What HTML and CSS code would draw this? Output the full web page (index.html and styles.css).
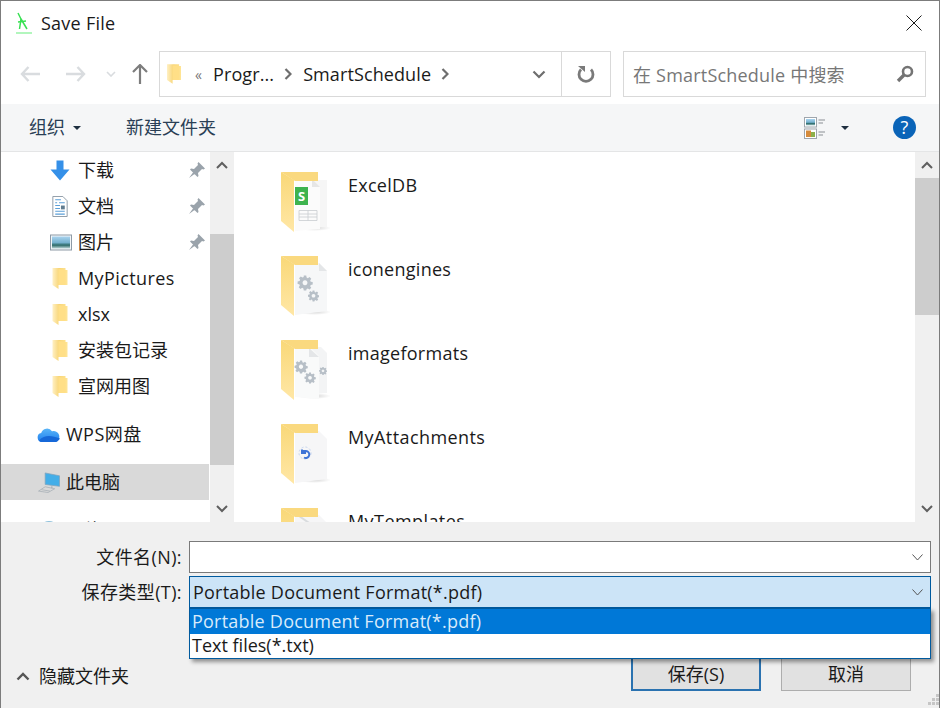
FILE: index.html
```html
<!DOCTYPE html>
<html lang="zh">
<head>
<meta charset="utf-8">
<title>Save File</title>
<link rel="stylesheet" href="styles.css">
</head>
<body>
<svg class="defs" aria-hidden="true">
  <defs>
    <linearGradient id="fy" x1="0" y1="0" x2="1" y2="0"><stop offset="0" stop-color="#fff0c4"/><stop offset=".45" stop-color="#f8d576"/><stop offset="1" stop-color="#ffe596"/></linearGradient>
    <linearGradient id="flap" x1="0" y1="0" x2="0" y2="1"><stop offset="0" stop-color="#f9d878"/><stop offset="1" stop-color="#ffe7a6"/></linearGradient>
    <linearGradient id="sky" x1="0" y1="0" x2="0" y2="1"><stop offset="0" stop-color="#a9d3ef"/><stop offset=".5" stop-color="#76b2cf"/><stop offset=".72" stop-color="#2c6a68"/><stop offset="1" stop-color="#c2dadd"/></linearGradient>
    <linearGradient id="cloud" x1="0" y1="0" x2="0" y2="1"><stop offset="0" stop-color="#58b4f8"/><stop offset="1" stop-color="#1f7fee"/></linearGradient>
    <radialGradient id="shade" cx=".5" cy=".5" r=".5"><stop offset="0" stop-color="#000" stop-opacity=".16"/><stop offset="1" stop-color="#000" stop-opacity="0"/></radialGradient>
    <symbol id="small-folder" viewBox="0 0 15 21">
      <path d="M0 0H13V2H15V17H6V21L0 17Z" fill="url(#fy)"/>
      <path d="M6 1 13 2V17H6Z" fill="#ffdf87"/>
    </symbol>
    <symbol id="pin" viewBox="0 0 18 18">
      <path d="M10.500 1 17 7.500 15.500 8.500 14 8 10 12 10.500 15 9.500 16 2 8.500 3 7.500 6 8 10 4 9.500 2.500Z M5 11.500 1 17 6.500 13Z" fill="#9aa3ab"/>
    </symbol>
    <symbol id="big-folder" viewBox="0 0 50 62">
      <path d="M0 1H37V10H14Z" fill="#fad97f"/>
      <path d="M0 1 13 9V61L0 50Z" fill="url(#flap)"/>
    </symbol>
    <symbol id="gear" viewBox="0 0 24 26">
      <path d="M10 1h4l.6 3.200 2 .9 2.800-1.800 2.800 2.800-1.800 2.800.9 2 3.200.6v4l-3.200.6-.9 2 1.800 2.800-2.800 2.800-2.800-1.800-2 .9L14 25h-4l-.6-3.200-2-.9-2.800 1.800-2.800-2.800 1.800-2.800-.9-2L0 14.500v-4l3.200-.6.9-2L2.300 5.100 5.100 2.300l2.800 1.800 2-.9Z M12 8.500a4 4 0 1 0 .01 0Z" fill="#b7bfc7" fill-rule="evenodd"/>
    </symbol>
  </defs>
</svg>

<div class="window">
  <header class="titlebar">
    <svg class="app-icon" viewBox="0 0 16 22"><g fill="none" stroke="#38e052" stroke-width="1.500"><path d="M2 1 5 7 3.500 17"/><path d="M5 7 8 12 11 17"/><path d="M2 10 10 9"/></g><path d="M0 21H16" stroke="#7ff090" stroke-width="1.200"/></svg>
    <span class="title">Save File</span>
    <svg class="close" viewBox="0 0 16 16"><path d="M.5.5 15.500 15.500M15.500.5.500 15.500" stroke="#1a1a1a" stroke-width="1" fill="none"/></svg>
  </header>

  <nav class="navbar">
    <svg class="nav-arrow back" viewBox="0 0 20 16"><path d="M8.500 1 2 8l6.500 7M2 8H20" fill="none" stroke="#d9dcdf" stroke-width="2.400"/></svg>
    <svg class="nav-arrow fwd" viewBox="0 0 20 16"><path d="M11.500 1 18 8l-6.500 7M18 8H0" fill="none" stroke="#d9dcdf" stroke-width="2.400"/></svg>
    <svg class="nav-chev" viewBox="0 0 10 6"><path d="M1 1 5 5 9 1" fill="none" stroke="#d9dcdf" stroke-width="1.600"/></svg>
    <svg class="nav-up" viewBox="0 0 16 20"><path d="M1 8 8 1l7 7M8 1V20" fill="none" stroke="#7d7d7d" stroke-width="2.200"/></svg>
    <div class="address">
      <svg class="addr-folder"><use href="#small-folder"/></svg>
      <span class="crumb-more">«</span>
      <span class="crumb">Progr...</span>
      <svg class="crumb-sep" viewBox="0 0 8 12"><path d="M1.500 1 6.500 6l-5 5" fill="none" stroke="#6e6e6e" stroke-width="2.200"/></svg>
      <span class="crumb">SmartSchedule</span>
      <svg class="crumb-sep" viewBox="0 0 8 12"><path d="M1.500 1 6.500 6l-5 5" fill="none" stroke="#6e6e6e" stroke-width="2.200"/></svg>
      <svg class="addr-drop" viewBox="0 0 14 9"><path d="M1.500 1.500 7 7l5.500-5.500" fill="none" stroke="#6e6e6e" stroke-width="2.200"/></svg>
      <div class="refresh">
        <svg viewBox="0 0 18 18"><path d="M4 4.500A7 7 0 1 0 14 4.500" fill="none" stroke="#7a7a7a" stroke-width="2.800"/><path d="M1 1 8 1 8 7Z" fill="#7a7a7a"/></svg>
      </div>
    </div>
    <div class="search">
      <span>在 SmartSchedule 中搜索</span>
      <svg viewBox="0 0 18 18"><circle cx="11.500" cy="6.500" r="4.500" fill="none" stroke="#747474" stroke-width="2.600"/><path d="M8 10 2 16" stroke="#747474" stroke-width="3.400"/></svg>
    </div>
  </nav>

  <div class="toolbar">
    <span class="tool">组织</span>
    <i class="caret organize-caret"></i>
    <span class="tool new-folder">新建文件夹</span>
    <svg class="view-icon" viewBox="0 0 22 22">
      <rect x=".5" y=".5" width="12" height="9.500" fill="#fff" stroke="#9fa6ad"/><rect x="2" y="2" width="9" height="6.500" fill="url(#sky)"/>
      <rect x=".5" y="12" width="12" height="9.500" fill="#fff" stroke="#9fa6ad"/><rect x="2" y="13.500" width="5" height="6.500" fill="#d58b3c"/><rect x="7" y="15" width="4" height="5" fill="#8db04a"/>
      <path d="M14.500 3H21M14.500 6H19M14.500 15H21M14.500 18H19" stroke="#8a8f94"/>
    </svg>
    <i class="caret view-caret"></i>
    <div class="help">?</div>
  </div>

  <main class="content">
    <aside class="tree">
      <div class="tree-row sub"><svg class="tree-icon" viewBox="0 0 20 20"><path d="M6.500 0H13.500V9H19.500L10 20 .5 9H6.500Z" fill="#3590e8"/></svg><span class="zh">下载</span><svg class="pin"><use href="#pin"/></svg></div>
      <div class="tree-row sub"><svg class="tree-icon" viewBox="0 0 20 22"><path d="M2.500.5H13L17.500 5V21.500H2.500Z" fill="#fff" stroke="#8e9aa6"/><path d="M5 4h6M5 7h2M9 7h6M5 10h5M5 13h5M5 16h10M5 19h10" stroke="#5b9fd8" stroke-width="1.100"/><rect x="11" y="10" width="4" height="4" fill="#607c90"/></svg><span class="zh">文档</span><svg class="pin"><use href="#pin"/></svg></div>
      <div class="tree-row sub"><svg class="tree-icon wide" viewBox="0 0 22 16"><rect x=".5" y=".5" width="21" height="15" fill="#f3f6f8" stroke="#8e9aa6"/><rect x="2" y="2" width="18" height="12" fill="url(#sky)"/></svg><span class="zh">图片</span><svg class="pin"><use href="#pin"/></svg></div>
      <div class="tree-row sub"><svg class="tree-icon"><use href="#small-folder"/></svg><span class="name-pics">MyPictures</span></div>
      <div class="tree-row sub"><svg class="tree-icon"><use href="#small-folder"/></svg><span>xlsx</span></div>
      <div class="tree-row sub"><svg class="tree-icon"><use href="#small-folder"/></svg><span class="zh">安装包记录</span></div>
      <div class="tree-row sub"><svg class="tree-icon"><use href="#small-folder"/></svg><span class="zh">宣网用图</span></div>
      <div class="tree-row top group"><svg class="tree-icon wide-top" viewBox="0 0 24 16"><path d="M5 15.500A4.500 4.500 0 0 1 4.200 6.600 6 6 0 0 1 15 4.800 5.200 5.200 0 1 1 18.500 15.500Z" fill="url(#cloud)"/><path d="M2 14C8 8 14 9 23 12 21 15 19 15.500 18.500 15.500H5Q3 15.500 2 14Z" fill="#1668d8"/></svg><span class="zh name-wps">WPS网盘</span></div>
      <div class="tree-row top group selected"><svg class="tree-icon wide-top" viewBox="0 0 24 22"><path d="M8 1 23 4V15L8 13Z" fill="#43aee8" stroke="#7fa4bd" stroke-width=".8"/><path d="M15 15V17" stroke="#9aa3ab"/><path d="M1 20 8 15.500 18 17.500 11 21.500ZM4 18.500 13 20" fill="none" stroke="#a7afb6" stroke-width=".8"/></svg><span class="zh">此电脑</span></div>
      <div class="tree-row top group"><svg class="tree-icon wide-top" viewBox="0 0 22 22"><circle cx="11" cy="11" r="10" fill="#8fc1dc"/></svg><span class="zh">网络</span></div>
    </aside>
    <div class="scrollbar tree-scroll">
      <button class="sb-btn"><svg viewBox="0 0 12 8"><path d="M1 7 6 2l5 5" fill="none" stroke="#5f5f5f" stroke-width="2"/></svg></button>
      <div class="sb-track"><div class="sb-pad p1"></div><div class="sb-thumb t1"></div></div>
      <button class="sb-btn"><svg viewBox="0 0 12 8"><path d="M1 1 6 6l5-5" fill="none" stroke="#5f5f5f" stroke-width="2"/></svg></button>
    </div>

    <section class="files">
      <div class="file">
        <svg class="big" viewBox="0 0 50 62">
          <ellipse cx="33" cy="57" rx="17" ry="3" fill="url(#shade)"/>
          <path d="M22 9H46V56H22Z" fill="#f6f6f6"/>
          <path d="M14 8H31L39 16V58L14 60Z" fill="#fbfbfb"/>
          <path d="M31 8V16H39Z" fill="#e6e6e6"/>
          <use href="#big-folder" width="50" height="62"/>
          <rect x="14" y="16" width="13" height="18" fill="#3eb34f"/>
          <text x="17" y="30" class="badge">S</text>
          <path d="M18 39.500H36V49.500H18ZM18 43H36M18 46H36M27 39.500V49.500" fill="none" stroke="#c9cdd1" stroke-width=".8"/>
        </svg>
        <span>ExcelDB</span>
      </div>
      <div class="file">
        <svg class="big" viewBox="0 0 50 62">
          <ellipse cx="33" cy="57" rx="17" ry="3" fill="url(#shade)"/>
          <path d="M14 8H38L46 16V56L14 60Z" fill="#f6f7f8"/>
          <path d="M38 8V16H46Z" fill="#e4e6e8"/>
          <use href="#big-folder" width="50" height="62"/>
          <use href="#gear" x="16" y="20" width="16" height="16"/>
          <use href="#gear" x="27" y="35" width="11" height="12"/>
        </svg>
        <span>iconengines</span>
      </div>
      <div class="file">
        <svg class="big" viewBox="0 0 50 62">
          <ellipse cx="33" cy="57" rx="17" ry="3" fill="url(#shade)"/>
          <path d="M30 8H40L46 14V54L30 55Z" fill="#f3f4f5"/>
          <path d="M14 9H30L38 17V60L14 58Z" fill="#f9fafa"/>
          <path d="M28 9V18H38Z" fill="#e4e6e8"/>
          <use href="#big-folder" width="50" height="62"/>
          <use href="#gear" x="13" y="21" width="14" height="14"/>
          <use href="#gear" x="23" y="33" width="12" height="12"/>
          <use href="#gear" x="38" y="26" width="8" height="12"/>
        </svg>
        <span>imageformats</span>
      </div>
      <div class="file">
        <svg class="big" viewBox="0 0 50 62">
          <ellipse cx="33" cy="57" rx="17" ry="3" fill="url(#shade)"/>
          <path d="M14 8H38L46 16V56L14 60Z" fill="#f6f6f7"/>
          <use href="#big-folder" width="50" height="62"/>
          <circle cx="24" cy="30" r="6" fill="none" stroke="#c4d3ee" stroke-dasharray="2 2"/>
          <path d="M21 26.500 21 30H25M21.500 28H25A3.500 3.500 0 1 1 23 34.500" fill="none" stroke="#3f74d6" stroke-width="2"/>
        </svg>
        <span class="name-long">MyAttachments</span>
      </div>
      <div class="file">
        <svg class="big" viewBox="0 0 50 62">
          <path d="M14 8H38L46 16V56L14 60Z" fill="#f6f6f7"/>
          <path d="M18 9 34 20" stroke="#d9dcde" stroke-width="2" fill="none"/>
          <use href="#big-folder" width="50" height="62"/>
        </svg>
        <span class="name-long">MyTemplates</span>
      </div>
    </section>
    <div class="scrollbar files-scroll">
      <button class="sb-btn"><svg viewBox="0 0 12 8"><path d="M1 7 6 2l5 5" fill="none" stroke="#5f5f5f" stroke-width="2"/></svg></button>
      <div class="sb-track"><div class="sb-thumb t2"></div></div>
      <button class="sb-btn"><svg viewBox="0 0 12 8"><path d="M1 1 6 6l5-5" fill="none" stroke="#5f5f5f" stroke-width="2"/></svg></button>
    </div>
  </main>

  <footer class="panel">
    <div class="form">
      <label>文件名(N):</label>
      <div class="combo">
        <span></span>
        <svg viewBox="0 0 11 7"><path d="M.5.5 5.500 6 10.500.5" fill="none" stroke="#555" stroke-width="1"/></svg>
      </div>
      <label>保存类型(T):</label>
      <div class="combo open">
        <span class="format">Portable Document Format(*.pdf)</span>
        <svg viewBox="0 0 11 7"><path d="M.5.5 5.500 6 10.500.5" fill="none" stroke="#555" stroke-width="1"/></svg>
        <ul class="dropdown">
          <li class="active format">Portable Document Format(*.pdf)</li>
          <li>Text files(*.txt)</li>
        </ul>
      </div>
    </div>
    <div class="actions">
      <div class="toggle">
        <svg viewBox="0 0 14 9"><path d="M1.500 7.500 7 2l5.500 5.500" fill="none" stroke="#555" stroke-width="2.400"/></svg>
        <span class="zh">隐藏文件夹</span>
      </div>
      <button class="btn primary">保存(S)</button>
      <button class="btn">取消</button>
    </div>
    <svg class="grip" viewBox="0 0 12 12"><path d="M9 0h3v3H9zM5 4h3v3H5zM9 4h3v3H9zM1 8h3v3H1zM5 8h3v3H5zM9 8h3v3H9z" fill="#c6c6c6"/></svg>
  </footer>
</div>
</body>
</html>
```

FILE: styles.css
```css
* { box-sizing: border-box; }
html, body { margin: 0; padding: 0; }
body {
  width: 940px;
  height: 708px;
  overflow: hidden;
  background: #fff;
  font-family: "Open Sans", "Noto Sans CJK SC", sans-serif;
  font-size: 18px;
  color: #1a1a1a;
}
.defs { display: block; width: 0; height: 0; }
.zh { padding-bottom: 2px; }

.window {
  width: 940px;
  height: 708px;
  display: flex;
  flex-direction: column;
  border-top: 1px solid #7c7c7c;
  border-left: 1px solid #7c7c7c;
  border-right: 1px solid #7c7c7c;
  background: #fff;
}

/* Title bar */
.titlebar {
  height: 44px;
  flex: none;
  display: flex;
  align-items: center;
  padding: 0 17px 0 15px;
}
.app-icon { width: 16px; height: 22px; }
.title { margin-left: 9px; font-size: 18px; letter-spacing: .25px; color: #1a1a1a; }
.close { width: 16px; height: 16px; margin-left: auto; }

/* Navigation */
.navbar {
  height: 46px;
  margin-top: 6px;
  flex: none;
  display: flex;
  align-items: center;
  padding-left: 19px;
}
.nav-arrow { width: 20px; height: 16px; flex: none; }
.fwd { margin-left: 26px; }
.nav-chev { width: 10px; height: 6px; margin-left: 20px; flex: none; }
.nav-up { width: 16px; height: 20px; margin-left: 16px; flex: none; }
.address {
  width: 452px;
  height: 46px;
  margin-left: 11px;
  flex: none;
  display: flex;
  align-items: center;
  border: 1px solid #d9d9d9;
  padding-left: 7px;
  font-size: 18px;
}
.addr-folder { width: 14px; height: 20px; flex: none; }
.crumb-more { margin-left: 14px; width: 18px; color: #777; font-size: 14px; }
.crumb { letter-spacing: .1px; }
.crumb-sep { width: 8px; height: 12px; margin: 0 11px 0 10px; flex: none; }
.addr-drop { width: 14px; height: 9px; margin-left: 72px; flex: none; }
.refresh {
  margin-left: auto;
  width: 49px;
  height: 44px;
  border-left: 1px solid #d9d9d9;
  display: flex;
  align-items: center;
  justify-content: center;
}
.refresh svg { width: 18px; height: 18px; }
.search {
  width: 303px;
  height: 46px;
  margin-left: 12px;
  flex: none;
  display: flex;
  align-items: center;
  justify-content: space-between;
  border: 1px solid #d9d9d9;
  padding: 0 11px 0 9px;
  color: #777;
  letter-spacing: .2px;
}
.search svg { width: 18px; height: 18px; }

/* Toolbar */
.toolbar {
  height: 48px;
  margin-top: 7px;
  flex: none;
  display: flex;
  align-items: center;
  padding-left: 28px;
  background: #f5f6f7;
  border-bottom: 1px solid #e4e5e6;
}
.tool { color: #2a3f55; font-size: 18px; padding-bottom: 3px; }
.caret {
  width: 0;
  height: 0;
  flex: none;
  border-left: 4px solid transparent;
  border-right: 4px solid transparent;
  border-top: 4px solid #1e2f40;
}
.organize-caret { margin-left: 8px; }
.new-folder { margin-left: 45px; }
.view-icon { width: 22px; height: 22px; margin-left: auto; flex: none; }
.view-caret { margin-left: 15px; }
.help {
  width: 23px;
  height: 23px;
  margin: 0 23px 0 44px;
  flex: none;
  border-radius: 50%;
  background: #0a64b8;
  color: #fff;
  font-size: 18px;
  line-height: 23px;
  text-align: center;
}

/* Content */
.content {
  height: 370px;
  flex: none;
  display: flex;
  overflow: hidden;
}
.tree { width: 208px; flex: none; overflow: hidden; margin-right: 1px; }
.tree-row {
  height: 36px;
  display: flex;
  align-items: center;
  padding-right: 3px;
  color: #1a1a1a;
}
.tree-row.group { margin-top: 12px; }
.tree-row.sub { padding-left: 49px; }
.tree-row.top { padding-left: 36px; }
.tree-row.selected { background: #d9d9d9; }
.tree-icon { width: 20px; height: 21px; margin-right: 8px; flex: none; }
.tree-icon.wide { width: 22px; margin-right: 6px; }
.tree-icon.wide-top { width: 24px; margin-right: 5px; }
.name-pics { letter-spacing: .4px; }
.name-wps { letter-spacing: .5px; }
.pin { width: 18px; height: 18px; margin-left: auto; flex: none; }

.scrollbar {
  width: 24px;
  flex: none;
  display: flex;
  flex-direction: column;
  background: #f0f0f0;
}
.sb-btn {
  height: 26px;
  flex: none;
  display: flex;
  align-items: center;
  justify-content: center;
  border: 0;
  padding: 0;
  background: #f0f0f0;
}
.sb-btn svg { width: 12px; height: 8px; }
.sb-track { flex: 1; }
.sb-pad.p1 { height: 56px; }
.sb-thumb { background: #cdcdcd; }
.t1 { height: 231px; }
.t2 { height: 137px; }
.files-scroll { margin-left: 1px; }

.files {
  width: 677px;
  flex: none;
  margin-left: 3px;
  overflow: hidden;
  padding-left: 44px;
}
.file {
  height: 84px;
  padding-top: 19px;
  display: flex;
  align-items: flex-start;
  color: #1a1a1a;
}
.file span { margin-left: 17px; line-height: 28px; letter-spacing: .27px; }
.file span.name-long { letter-spacing: .42px; }
.big { width: 50px; height: 62px; flex: none; }
.badge { font: 700 13px "Open Sans", sans-serif; fill: #fff; }

/* Bottom panel */
.panel {
  flex: 1;
  position: relative;
  background: #f0f0f0;
  padding: 19px 7px 0 0;
}
.form {
  display: grid;
  grid-template-columns: 181px 742px;
  grid-auto-rows: 32px;
  row-gap: 3px;
  column-gap: 7px;
  justify-content: start;
}
.form label { text-align: right; line-height: 32px; color: #1a1a1a; letter-spacing: .4px; }
.combo {
  position: relative;
  display: flex;
  align-items: center;
  justify-content: space-between;
  padding: 0 7px 0 3px;
  background: #fff;
  border: 1px solid #7a7a7a;
}
.combo svg { width: 11px; height: 7px; }
.combo.open { background: #cce4f7; border-color: #005a9e; }
.format { letter-spacing: .23px; }
.dropdown {
  position: absolute;
  top: 31px;
  left: -1px;
  right: -1px;
  margin: 0;
  padding: 0;
  list-style: none;
  z-index: 5;
  background: #fff;
  border: 1px solid #005a9e;
  box-shadow: 3px 3px 4px rgba(0, 0, 0, .4);
}
.dropdown li { height: 24px; line-height: 23px; padding-left: 2px; }
.dropdown li.active { height: 25px; line-height: 24px; background: #0078d7; color: #d8ebfb; }

.actions {
  display: flex;
  align-items: flex-start;
  margin-top: 49px;
  padding-right: 21px;
}
.toggle {
  display: flex;
  align-items: center;
  height: 38px;
  padding-left: 15px;
  margin-right: auto;
}
.toggle svg { width: 14px; height: 9px; margin-right: 9px; }
.btn {
  width: 130px;
  height: 34px;
  font: inherit;
  color: #1a1a1a;
  background: #e1e1e1;
  border: 1px solid #adadad;
  padding: 0 0 3px;
  margin-left: 20px;
}
.btn.primary { border: 2px solid #2a72b0; }
.grip { position: absolute; right: 0; bottom: 2px; width: 12px; height: 12px; }
```
